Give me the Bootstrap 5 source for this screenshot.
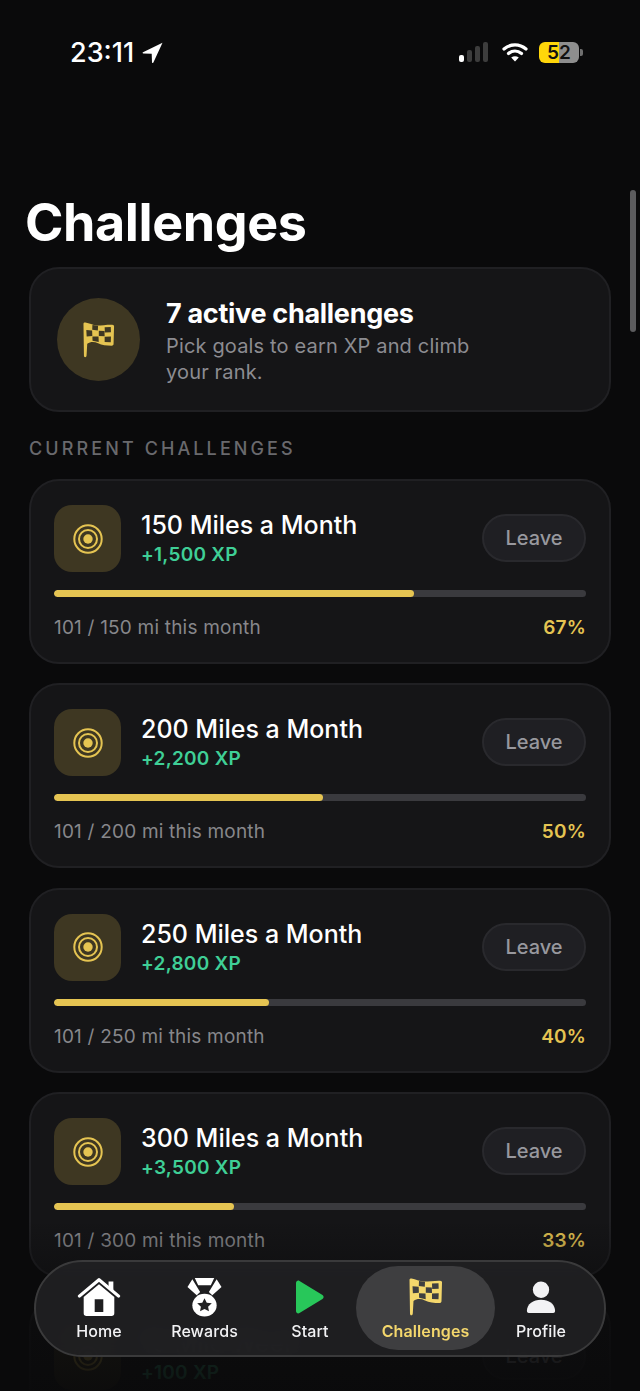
<!DOCTYPE html>
<html lang="en">

<head>
	<meta charset="UTF-8" />
	<meta name="viewport" content="width=device-width, initial-scale=1" />
	<title>Challenges</title>
	<link href="https://cdn.jsdelivr.net/npm/bootstrap@5.3.0/dist/css/bootstrap.min.css" rel="stylesheet" />
	<style>
		:root {
		  --gold: #e5c452;
		  --gold-bg: #3e3722;
		  --card-bg: #151517;
		  --card-line: #202023;
		  --muted: #8c8c91;
		}

		html, body {
		  height: 1391px;
		  overflow: hidden;
		}

		body {
		  font-family: 'Inter', sans-serif;
		  background: #0a0a0b;
		  color: #fff;
		  position: relative;
		}

		.status-row {
		  height: 104px;
		  padding: 38px 57px 0 70px;
		  align-items: flex-start;
		}

		.status-time {
		  font-size: 27px;
		  font-weight: 500;
		  line-height: 28px;
		  padding-top: 1px;
		}

		.battery-box {
		  width: 40px;
		  height: 21px;
		  border-radius: 6px;
		  background: linear-gradient(to right, #ffd60a 50%, #8e8e8e 50%);
		  color: #111;
		  font-size: 19px;
		  font-weight: 600;
		  line-height: 21px;
		  text-align: center;
		}

		.battery-cap {
		  width: 3px;
		  height: 7px;
		  border-radius: 0 2px 2px 0;
		  background: #6f6f6f;
		  margin-left: 1px;
		}

		.page-body {
		  padding: 0 29px;
		}

		.page-title {
		  font-size: 52px;
		  font-weight: 700;
		  line-height: 60px;
		  letter-spacing: -0.4px;
		  margin: 89px 0 14px -4px;
		}

		.dark-card {
		  background: var(--card-bg);
		  border: 2px solid var(--card-line);
		  color: #fff;
		}

		.hero-card {
		  height: 145px;
		  border-radius: 30px;
		  padding: 0 26px;
		}

		.hero-icon {
		  width: 83px;
		  height: 83px;
		  background: var(--gold-bg);
		  margin-right: 26px;
		  flex-shrink: 0;
		}

		.hero-title {
		  font-size: 27px;
		  font-weight: 700;
		  line-height: 32px;
		  letter-spacing: -0.3px;
		  padding-top: 3px;
		  margin-bottom: 3px;
		}

		.hero-text {
		  font-size: 20px;
		  line-height: 26px;
		  letter-spacing: 0.16px;
		  color: var(--muted);
		  width: 320px;
		}

		.section-label {
		  font-size: 18px;
		  font-weight: 500;
		  line-height: 22px;
		  letter-spacing: 3.1px;
		  color: #69696d;
		  margin: 26px 0 19px;
		}

		.goal-card {
		  height: 185px;
		  border-radius: 30px;
		  padding: 24px 23px 0;
		  margin-bottom: 19.4px;
		}

		/* last card runs off the screen behind the tab bar */
		.goal-card-cut {
		  height: 95px;
		  margin-bottom: 0;
		  border-bottom: 0;
		  border-bottom-left-radius: 0;
		  border-bottom-right-radius: 0;
		}

		.goal-icon {
		  width: 67px;
		  height: 67px;
		  border-radius: 18px;
		  background: var(--gold-bg);
		  margin-right: 20px;
		  flex-shrink: 0;
		}

		.goal-head {
		  padding-top: 5px;
		}

		.goal-name {
		  font-size: 25px;
		  font-weight: 500;
		  line-height: 30px;
		  margin-bottom: 3px;
		}

		.goal-xp {
		  font-size: 19px;
		  font-weight: 600;
		  line-height: 24px;
		  color: #3fcf96;
		  letter-spacing: 0.25px;
		}

		.btn-leave {
		  width: 104px;
		  height: 48px;
		  margin-top: 9px;
		  border-radius: 24px;
		  background: #1f1f23;
		  border: 2px solid #29292d;
		  color: #98989e;
		  font-size: 20px;
		  font-weight: 500;
		  padding: 0;
		}

		.goal-track {
		  height: 7px;
		  margin-top: 18px;
		  background: #3a3a3e;
		  border-radius: 4px;
		}

		.goal-track .progress-bar {
		  background: var(--gold);
		  border-radius: 4px;
		}

		.goal-foot {
		  font-size: 19px;
		  line-height: 24px;
		  margin-top: 19px;
		  color: #87878b;
		  letter-spacing: 0.2px;
		}

		.goal-pct {
		  font-weight: 600;
		  color: var(--gold);
		}

		.scroll-thumb {
		  position: absolute;
		  left: 630px;
		  top: 190px;
		  width: 6px;
		  height: 142px;
		  border-radius: 3px;
		  background: #5c5c5e;
		}

		.bottom-fade {
		  position: absolute;
		  left: 0;
		  right: 0;
		  top: 1220px;
		  bottom: 0;
		  background: linear-gradient(to bottom, rgba(10, 10, 11, 0) 0%, rgba(10, 10, 11, .82) 60%, rgba(10, 10, 11, .95) 100%);
		}

		.tab-bar {
		  position: absolute;
		  left: 34px;
		  top: 1260px;
		  width: 572px;
		  height: 97px;
		  border-radius: 49px;
		  background: rgba(33, 33, 35, .88);
		  border: 2px solid #3a3a3b;
		  backdrop-filter: blur(8px);
		  padding: 4px 0 0 10px;
		}

		.tab-item {
		  height: 84px;
		  font-size: 16px;
		  font-weight: 500;
		  line-height: 20px;
		  color: #f2f2f4;
		  letter-spacing: 0.1px;
		  padding-bottom: 9px;
		  flex-shrink: 0;
		}

		.tab-item svg {
		  height: 40px;
		  margin-bottom: 4px;
		}

		.tab-active {
		  background: #3e3e40;
		  border-radius: 42px;
		  color: #f4d76c;
		  font-weight: 600;
		}
	</style>
</head>

<body>
	<svg width="0" height="0" class="d-block position-absolute">
		<defs>
			<symbol id="flag" viewBox="0 0 34 38">
				<path fill="currentColor" d="M.5 2C.5.800 1.500.300 2.500.500 7 1 10 3.500 15 3.500 20 3.500 26 2.500 31 2.700 32.500 2.700 33 3.500 33 4.500L32.500 23C32.500 24.500 31.500 25 30.500 25 25 25 20 24.500 16 22.500 12 20.500 8 20.500 4.500 23L3.800 35.500C3.700 36.800 3 37.300 2.300 37.300 1.500 37.300 1 36.500 1 35.500Z" />
				<path fill="var(--flag-check)" d="M10 3l6 .8-.2 5-6-.8zM23 5.500l6.500-.3.200 5.500-6.500.3zM3.500 8.300l6.200.5.200 6-6 .4zM16.800 9.300l6 .2.200 5.500-6.200-.2zM10 15.200l6.500.2.200 5.800-6.600-1.400zM23 15.500l6.700-.2-.2 6-6.500-.3z" />
			</symbol>
			<symbol id="target" viewBox="0 0 30 30">
				<circle cx="15" cy="15" r="13.700" fill="none" stroke="currentColor" stroke-width="2" />
				<circle cx="15" cy="15" r="9" fill="none" stroke="currentColor" stroke-width="2" />
				<circle cx="15" cy="15" r="4.700" fill="currentColor" />
			</symbol>
		</defs>
	</svg>

	<div class="status-row d-flex justify-content-between">
		<div class="d-flex align-items-center gap-2">
			<span class="status-time">23:11</span>
			<svg width="21" height="21" viewBox="0 0 21 21"><path fill="#fff" d="M20.500.8 1 10.200c-.7.400-.5 1.200.3 1.200l8.400.3.300 8.600c0 .8 1 1 1.400.3z" /></svg>
		</div>
		<div class="d-flex align-items-center" style="height:28px">
			<svg width="32" height="22" viewBox="0 0 32 22"><rect x="1" y="14" width="5" height="7" rx="2" fill="#fff" /><rect x="9" y="9" width="5" height="12" rx="2" fill="#3d3d3d" /><rect x="17" y="5" width="5" height="16" rx="2" fill="#3d3d3d" /><rect x="25" y="1" width="5" height="20" rx="2" fill="#3d3d3d" /></svg>
			<svg width="28" height="22" viewBox="0 0 28 22" fill="none" stroke="#fff" stroke-width="3.200" stroke-linecap="round" style="margin:0 10px 0 11px"><path d="M3 8c6.400-5.600 15.600-5.600 22 0" /><path d="M7.500 12.500c3.900-3.300 9.100-3.300 13 0" /><path fill="#fff" stroke="none" d="M14 20.500l-3.800-4c2.300-1.600 5.300-1.600 7.600 0z" /></svg>
			<div class="battery-box">52</div>
			<div class="battery-cap"></div>
		</div>
	</div>

	<div class="page-body">
		<h1 class="page-title">Challenges</h1>

		<div class="card dark-card hero-card flex-row align-items-center">
			<div class="hero-icon rounded-circle d-flex align-items-center justify-content-center">
				<svg width="32" height="36" style="color:#e5c452;--flag-check:#3e3722"><use href="#flag" /></svg>
			</div>
			<div>
				<div class="hero-title">7 active challenges</div>
				<div class="hero-text">Pick goals to earn XP and climb your rank.</div>
			</div>
		</div>

		<div class="section-label">CURRENT CHALLENGES</div>

		<div id="goalList"></div>
	</div>

	<div class="bottom-fade"></div>
	<div class="scroll-thumb"></div>

	<div class="tab-bar d-flex align-items-start">
		<div class="tab-item d-flex flex-column align-items-center justify-content-end" style="width:106px">
			<svg width="44" height="40" viewBox="0 0 46 44" preserveAspectRatio="none"><path fill="none" stroke="#fff" stroke-width="3.400" stroke-linecap="round" stroke-linejoin="round" d="M2.500 21 23 3l20.500 18" /><path fill="#fff" d="M33 5h5v11l-5-4z" /><path fill="#fff" fill-rule="evenodd" d="M7 22 23 8l16 14v18c0 2-1 3-3 3H10c-2 0-3-1-3-3zM18.500 24.500v14h9v-14z" /></svg>
			<span>Home</span>
		</div>
		<div class="tab-item d-flex flex-column align-items-center justify-content-end" style="width:105px">
			<svg width="35" height="40" viewBox="0 0 36 44" preserveAspectRatio="none"><path fill="#fff" d="M8 1h20l-3.500 8h-13zM5.500 2.500l8 14-3.500 3.500L.5 11zM30.500 2.500l-8 14 3.500 3.500 9.500-9z" /><circle cx="18" cy="31" r="12.500" fill="#fff" /><path fill="#212123" d="m18 23.500 2.300 4.800 5.200.7-3.800 3.600.9 5.200-4.600-2.500-4.600 2.500.9-5.200-3.800-3.600 5.200-.7z" /></svg>
			<span>Rewards</span>
		</div>
		<div class="tab-item d-flex flex-column align-items-center justify-content-end" style="width:106px">
			<svg width="30" height="40" viewBox="0 0 30 40"><path fill="#28c75a" d="M1 6C1 4 3 3 4.500 4l23 14c1.500 1 1.500 3 0 4l-23 14C3 37 1 36 1 34z" /></svg>
			<span>Start</span>
		</div>
		<div class="tab-item tab-active d-flex flex-column align-items-center justify-content-end" style="width:139px;margin-left:-7px">
			<svg width="34" height="40" style="--flag-check:#3e3e40"><use href="#flag" /></svg>
			<span>Challenges</span>
		</div>
		<div class="tab-item d-flex flex-column align-items-center justify-content-end" style="width:92px">
			<svg width="34" height="40" viewBox="0 0 34 44"><circle cx="17" cy="14" r="9" fill="#f2f2f4" /><path fill="#f2f2f4" d="M1.500 37.500C1.500 29.500 8.500 25 17 25s15.500 4.500 15.500 12.500c0 1.500-1 2-2 2h-27c-1 0-2-.5-2-2z" /></svg>
			<span>Profile</span>
		</div>
	</div>

	<script>
		const goals = [
		  {name: "150 Miles a Month", xp: "+1,500 XP", note: "101 / 150 mi this month", pct: 67, fill: 67.7},
		  {name: "200 Miles a Month", xp: "+2,200 XP", note: "101 / 200 mi this month", pct: 50, fill: 50.5},
		  {name: "250 Miles a Month", xp: "+2,800 XP", note: "101 / 250 mi this month", pct: 40, fill: 40.4},
		  {name: "300 Miles a Month", xp: "+3,500 XP", note: "101 / 300 mi this month", pct: 33, fill: 33.8},
		  {name: "10 Mile Week", xp: "+100 XP"}
		];

		function renderGoal(goal) {
		  const hasBar = goal.note !== undefined;
		  return `
		    <div class="card dark-card goal-card ${hasBar ? "" : "goal-card-cut"}">
		      <div class="d-flex">
		        <div class="goal-icon d-flex align-items-center justify-content-center">
		          <svg width="30" height="30" style="color:#e5c452"><use href="#target" /></svg>
		        </div>
		        <div class="flex-grow-1 goal-head">
		          <div class="goal-name">${goal.name}</div>
		          <div class="goal-xp">${goal.xp}</div>
		        </div>
		        <button class="btn btn-leave">Leave</button>
		      </div>
		      ${hasBar ? `
		      <div class="progress goal-track">
		        <div class="progress-bar" style="width:${goal.fill}%"></div>
		      </div>
		      <div class="goal-foot d-flex justify-content-between">
		        <span>${goal.note}</span>
		        <span class="goal-pct">${goal.pct}%</span>
		      </div>` : ""}
		    </div>`;
		}

		document.getElementById("goalList").innerHTML = goals.map(renderGoal).join("");
	</script>
	<script src="https://cdn.jsdelivr.net/npm/bootstrap@5.3.0/dist/js/bootstrap.bundle.min.js"></script>
</body>

</html>
